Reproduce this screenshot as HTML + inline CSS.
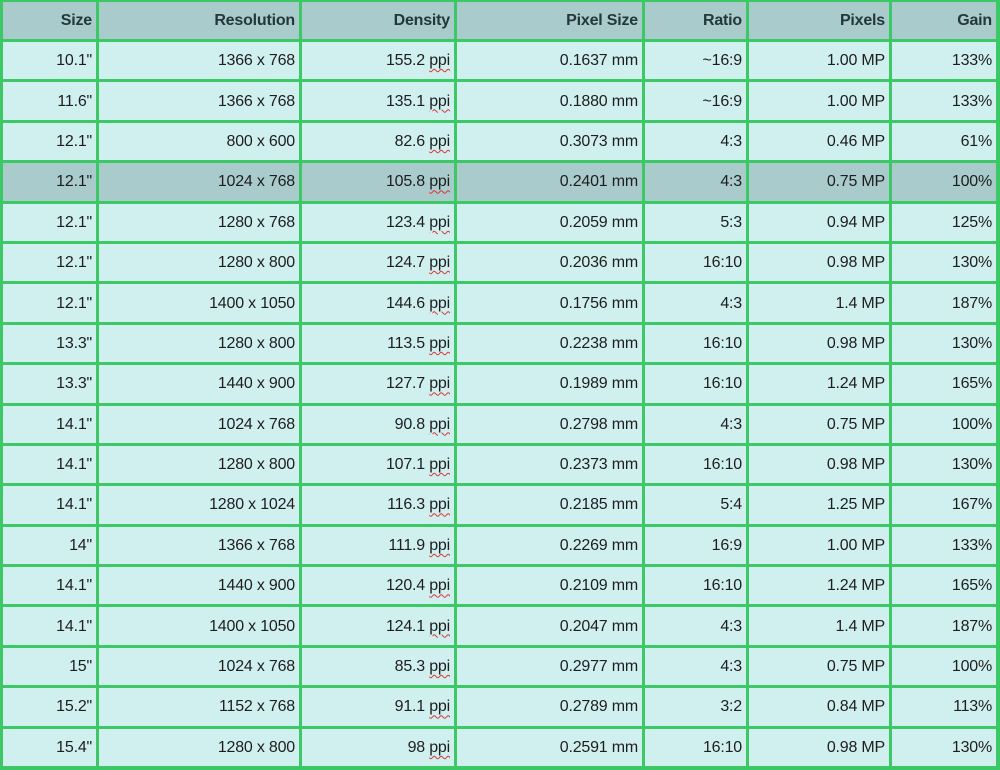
<!DOCTYPE html>
<html><head><meta charset="utf-8"><style>
html,body{margin:0;padding:0;background:#3cc864;width:1000px;height:770px;overflow:hidden}
table{border-collapse:separate;border-spacing:3px;background:#3cc864;table-layout:fixed;margin:-1px 0 0 0;font-family:"Liberation Sans",sans-serif;font-size:16px;color:#1e1e1e;letter-spacing:-0.2px}
td,th{padding:1px 4px 0 0;text-align:right;background:#d0f0ef;height:36.4px;white-space:nowrap;overflow:hidden}
th{background:#a9cbcb;height:36px;font-weight:bold;color:#24383a}
tr.h td{background:#a9cbcb}
u{text-decoration:underline wavy #d33;text-decoration-thickness:1px;text-underline-offset:3px}
</style></head><body>
<table>
<colgroup><col style="width:93px"><col style="width:200px"><col style="width:152px"><col style="width:185px"><col style="width:101px"><col style="width:140px"><col style="width:104px"></colgroup>
<tr><th>Size</th><th>Resolution</th><th>Density</th><th>Pixel Size</th><th>Ratio</th><th>Pixels</th><th>Gain</th></tr>
<tr><td>10.1"</td><td>1366 x 768</td><td>155.2 <u>ppi</u></td><td>0.1637 mm</td><td>~16:9</td><td>1.00 MP</td><td>133%</td></tr>
<tr><td>11.6"</td><td>1366 x 768</td><td>135.1 <u>ppi</u></td><td>0.1880 mm</td><td>~16:9</td><td>1.00 MP</td><td>133%</td></tr>
<tr><td>12.1"</td><td>800 x 600</td><td>82.6 <u>ppi</u></td><td>0.3073 mm</td><td>4:3</td><td>0.46 MP</td><td>61%</td></tr>
<tr class="h"><td>12.1"</td><td>1024 x 768</td><td>105.8 <u>ppi</u></td><td>0.2401 mm</td><td>4:3</td><td>0.75 MP</td><td>100%</td></tr>
<tr><td>12.1"</td><td>1280 x 768</td><td>123.4 <u>ppi</u></td><td>0.2059 mm</td><td>5:3</td><td>0.94 MP</td><td>125%</td></tr>
<tr><td>12.1"</td><td>1280 x 800</td><td>124.7 <u>ppi</u></td><td>0.2036 mm</td><td>16:10</td><td>0.98 MP</td><td>130%</td></tr>
<tr><td>12.1"</td><td>1400 x 1050</td><td>144.6 <u>ppi</u></td><td>0.1756 mm</td><td>4:3</td><td>1.4 MP</td><td>187%</td></tr>
<tr><td>13.3"</td><td>1280 x 800</td><td>113.5 <u>ppi</u></td><td>0.2238 mm</td><td>16:10</td><td>0.98 MP</td><td>130%</td></tr>
<tr><td>13.3"</td><td>1440 x 900</td><td>127.7 <u>ppi</u></td><td>0.1989 mm</td><td>16:10</td><td>1.24 MP</td><td>165%</td></tr>
<tr><td>14.1"</td><td>1024 x 768</td><td>90.8 <u>ppi</u></td><td>0.2798 mm</td><td>4:3</td><td>0.75 MP</td><td>100%</td></tr>
<tr><td>14.1"</td><td>1280 x 800</td><td>107.1 <u>ppi</u></td><td>0.2373 mm</td><td>16:10</td><td>0.98 MP</td><td>130%</td></tr>
<tr><td>14.1"</td><td>1280 x 1024</td><td>116.3 <u>ppi</u></td><td>0.2185 mm</td><td>5:4</td><td>1.25 MP</td><td>167%</td></tr>
<tr><td>14"</td><td>1366 x 768</td><td>111.9 <u>ppi</u></td><td>0.2269 mm</td><td>16:9</td><td>1.00 MP</td><td>133%</td></tr>
<tr><td>14.1"</td><td>1440 x 900</td><td>120.4 <u>ppi</u></td><td>0.2109 mm</td><td>16:10</td><td>1.24 MP</td><td>165%</td></tr>
<tr><td>14.1"</td><td>1400 x 1050</td><td>124.1 <u>ppi</u></td><td>0.2047 mm</td><td>4:3</td><td>1.4 MP</td><td>187%</td></tr>
<tr><td>15"</td><td>1024 x 768</td><td>85.3 <u>ppi</u></td><td>0.2977 mm</td><td>4:3</td><td>0.75 MP</td><td>100%</td></tr>
<tr><td>15.2"</td><td>1152 x 768</td><td>91.1 <u>ppi</u></td><td>0.2789 mm</td><td>3:2</td><td>0.84 MP</td><td>113%</td></tr>
<tr><td>15.4"</td><td>1280 x 800</td><td>98 <u>ppi</u></td><td>0.2591 mm</td><td>16:10</td><td>0.98 MP</td><td>130%</td></tr>
</table>
</body></html>
